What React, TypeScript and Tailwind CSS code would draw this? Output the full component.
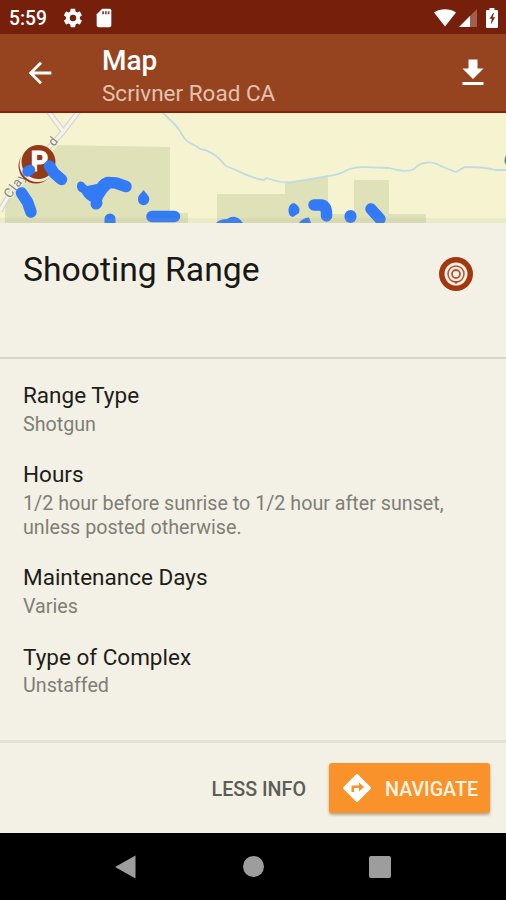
import React from "react";

const details = [
  { label: "Range Type", lines: ["Shotgun"] },
  { label: "Hours", lines: ["1/2 hour before sunrise to 1/2 hour after sunset,", "unless posted otherwise."] },
  { label: "Maintenance Days", lines: ["Varies"] },
  { label: "Type of Complex", lines: ["Unstaffed"] },
];

function StatusBar() {
  return (
    <div className="flex h-[34px] items-center bg-[#761f0b] pt-px pr-[8px] pl-[9px] text-white">
      <span className="w-[53px] pt-[2px] text-[19.300px] leading-none font-medium">5:59</span>
      <svg className="h-[22px] w-[22px]" viewBox="0 0 24 24" fill="currentColor">
        <path d="M19.4 13c0-.3.1-.6.1-1s0-.7-.1-1l2.100-1.700c.2-.1.2-.4.1-.6l-2-3.500c-.1-.2-.4-.3-.6-.2l-2.500 1c-.5-.4-1.100-.7-1.700-1l-.4-2.600c0-.2-.2-.4-.5-.4h-4c-.3 0-.5.2-.5.4l-.4 2.600c-.6.3-1.200.6-1.700 1l-2.500-1c-.2-.1-.5 0-.6.2l-2 3.500c-.1.2-.1.5.1.600l2.100 1.700c0 .3-.1.6-.1 1s0 .7.1 1l-2.100 1.700c-.2.100-.2.400-.1.600l2 3.500c.1.200.4.300.6.200l2.500-1c.5.400 1.100.7 1.700 1l.4 2.600c0 .2.200.4.500.4h4c.300 0 .500-.2.500-.4l.4-2.600c.6-.3 1.200-.6 1.700-1l2.500 1c.2.100.5 0 .6-.2l2-3.500c.1-.2.1-.5-.1-.6zM12 15.500a3.500 3.500 0 1 1 0-7 3.500 3.500 0 0 1 0 7z" />
      </svg>
      <svg className="ml-[9px] h-[22px] w-[22px]" viewBox="0 0 24 24">
        <path d="M18 2h-8L4 8v12c0 1.100.9 2 2 2h12c1.100 0 2-.9 2-2V4c0-1.100-.9-2-2-2z" fill="#fff" />
        <path d="M10 4.500h2V8h-2zM13 4.500h2V8h-2zM16 4.500h2V8h-2z" fill="#8d4a3b" />
      </svg>
      <div className="ml-auto flex items-center">
        <svg className="h-[20px] w-[24px]" viewBox="0 0 24 20" fill="currentColor">
          <path d="M1 4.500C7 .1 17 .1 23 4.500L12 18.500z" />
        </svg>
        <svg className="ml-[2px] h-[18px] w-[18px]" viewBox="0 0 18 18">
          <path d="M18 0V18H0z" fill="#a0604f" />
          <path d="M11 7V18H0z" fill="#fff" />
        </svg>
        <svg className="ml-[9px] h-[20px] w-[12px]" viewBox="0 0 12 20">
          <path d="M3.500 0h5v2H11q1 0 1 1v16q0 1-1 1H1q-1 0-1-1V3q0-1 1-1h2.500z" fill="#fff" />
          <path d="M7.500 5L4 10.500H6.200L5.200 15.500L8.700 9.500H6.500z" fill="#761f0b" stroke="#761f0b" strokeWidth=".5" />
        </svg>
      </div>
    </div>
  );
}

function Header() {
  return (
    <header className="flex h-[79px] items-start border-b-2 border-[#84200b] bg-[#96441f] text-white">
      <svg className="mt-[22px] ml-[23px] h-[34px] w-[34px]" viewBox="0 0 24 24" fill="currentColor">
        <path d="M20 11H7.830l5.590-5.590L12 4l-8 8 8 8 1.410-1.410L7.830 13H20z" />
      </svg>
      <div className="ml-[45px] pt-[10px]">
        <h1 className="text-[28px] leading-[34px] font-medium">Map</h1>
        <p className="text-[22.500px] leading-[31px] text-[#e2c1b2]">Scrivner Road CA</p>
      </div>
      <svg className="mt-[21px] mr-[15px] ml-auto h-[36px] w-[36px]" viewBox="0 0 24 24" fill="currentColor">
        <path d="M19 9h-4V3H9v6H5l7 7 7-7zM5 18v2h14v-2H5z" />
      </svg>
    </header>
  );
}

function RangeMap() {
  return (
    <svg className="block h-[110px] w-[506px] shrink-0" viewBox="0 113 506 110">
      <rect x="0" y="113" width="506" height="110" fill="#f6f4d0" />
      <g fill="#dfe1b9">
        <path d="M58 145L170 147V213H188V223H5V200L35 170z" />
        <path d="M217 194H285V182L328 176V214H354V180H389V214H426V223H217z" />
      </g>
      <path d="M161 111C167 118 177 124 181 133C187 145 194 143 200 149C210 150 218 156 226 166C238 170 251 179 264 180L267 178C277 182 289 184 300 181L323 177C333 175 338 176 347 170C357 166 368 167 389 168C397 170 407 173 414 169C420 162 430 161 437 164C444 168 451 170 456 172L465 167C479 167 489 168 495 170H506" fill="none" stroke="#c2dbe2" strokeWidth="1.800" />
      <g fill="none">
        <path d="M79 111L63 132L43 154L18 184Q8 195 0 211M48 111L63 131" stroke="#d6d2cd" strokeWidth="5.500" />
        <path d="M79 111L63 132L43 154L18 184Q8 195 0 211M48 111L63 131" stroke="#f6f3ea" strokeWidth="3.200" />
      </g>
      <text transform="translate(10 199) rotate(-53)" fontFamily="Roboto, sans-serif" fontSize="13" letterSpacing="1" fill="#85857c" stroke="#f3f0dc" strokeWidth="2" paintOrder="stroke">Clay</text>
      <text transform="translate(54 147) rotate(-51)" fontFamily="Roboto, sans-serif" fontSize="13" fill="#85857c" stroke="#f3f0dc" strokeWidth="2" paintOrder="stroke">d</text>
      <circle cx="36" cy="166" r="17.500" fill="#96351b" />
      <circle cx="37.500" cy="164" r="18" fill="#f6eedd" />
      <circle cx="38.500" cy="162" r="17" fill="#933a16" />
      <text x="39.500" y="171" textAnchor="middle" fontFamily="Roboto, sans-serif" fontSize="27" fontWeight="700" fill="#fff" stroke="#fff" strokeWidth="1">P</text>
      <g fill="none" stroke="#337af7" strokeWidth="11.500" strokeLinecap="round" strokeLinejoin="round">
        <path d="M49.500 166L54 173L61.500 179.500M21.500 193L27.500 202L31 212" />
        <path d="M30 170L27.500 171.500" strokeWidth="10.500" />
        <path d="M108 182.500L116 183L126 186.500" />
        <path d="M152 216.500H174.500" />
        <path d="M96 204L97 203M110 219V223" strokeWidth="11" />
        <path d="M314 205H321Q327 206 326.500 216M371 209L380 219" />
        <path d="M350.500 216V217" strokeWidth="12" />
      </g>
      <g fill="#337af7">
        <path d="M77 185Q78 180 83 182L87 186L97 184Q101 178 107 177L112 187Q107 191 103 198L101 203L91 202Q84 198 82 193Q76 190 77 185z" />
        <path d="M143.500 190Q147 194 149 197C151 207 138 208 138 199C138 195 141 194 143.500 190z" />
        <path d="M288.500 209Q290 202.500 295 203.500Q301 207 299 213L293 217Q288 216 288.500 209z" />
        <path d="M216 223Q220 219 227 219Q236 213 243 223zM299 223Q302 218 309 217.500L311 223z" />
      </g>
      <path d="M506 155Q503 161 506 165z" fill="#528a78" />
      <rect x="0" y="218" width="506" height="5" fill="#9ba283" opacity=".12" />
    </svg>
  );
}

function TargetBadge() {
  return (
    <svg className="h-[36px] w-[36px]" viewBox="0 0 36 36" fill="none">
      <circle cx="18" cy="18" r="17" fill="#a3370f" />
      <circle cx="18" cy="18" r="11.500" fill="#f8efe1" />
      <circle cx="18" cy="18" r="8" stroke="#aa5838" strokeWidth="1.500" />
      <circle cx="18" cy="18" r="4" stroke="#aa5838" strokeWidth="1.800" />
      <path d="M16 25.500L18 28L20 25.500z" fill="#a3370f" />
    </svg>
  );
}

export default function App() {
  return (
    <div className="flex h-[900px] w-[506px] flex-col overflow-hidden bg-[#f3f1e5] font-['Roboto',sans-serif]">
      <StatusBar />
      <Header />
      <RangeMap />
      <section className="flex h-[136px] shrink-0 items-start justify-between border-b-2 border-[#d5d6c8] pr-[32px] pl-[23px]">
        <h2 className="pt-[26px] text-[33.700px] leading-[42px] text-[#181815]">Shooting Range</h2>
        <div className="pt-[32.500px]"><TargetBadge /></div>
      </section>
      <section className="flex h-[384px] shrink-0 flex-col gap-[24.200px] border-b-[3px] border-[#e2e1d5] pt-[22px] pl-[23px]">
        {details.map((item) => (
          <div key={item.label}>
            <h3 className="text-[22.500px] leading-[29px] text-[#1d1d1a]">{item.label}</h3>
            {item.lines.map((line) => (
              <p key={line} className="text-[19.700px] leading-[23.500px] whitespace-nowrap text-[#7f7e77] first-of-type:pt-[2.700px]">{line}</p>
            ))}
          </div>
        ))}
      </section>
      <footer className="flex h-[90px] shrink-0 items-center justify-end pr-[16px]">
        <button className="mr-[23px] pt-[3px] text-[19.700px] font-medium text-[#5d5c56]">LESS INFO</button>
        <button className="flex h-[50px] w-[161px] items-center rounded-[3px] bg-[#f9922b] pl-[13px] text-[19.700px] font-medium text-[#fff4e2] shadow-[0_2px_3px_rgba(80,60,30,0.4)]">
          <svg className="mr-[13px] h-[30px] w-[30px]" viewBox="0 0 30 30">
            <path d="M14 1.500Q15 .5 16 1.500L28.500 14Q29.500 15 28.500 16L16 28.500Q15 29.500 14 28.500L1.500 16Q.5 15 1.500 14z" fill="#fff" />
            <path d="M9.500 19V13.500Q9.500 12.500 10.500 12.500H17V9.500L22 14L17 18.500V15H12V19z" fill="#f9922b" />
          </svg>
          <span className="pt-[3px]">NAVIGATE</span>
        </button>
      </footer>
      <nav className="flex h-[67px] shrink-0 items-center justify-between bg-black pr-[115px] pl-[115px]">
        <svg className="h-[24px] w-[21px]" viewBox="0 0 21 24" fill="#9d9d9d"><path d="M0 12L20.500 .5V23.500z" /></svg>
        <div className="ml-[2px] h-[21px] w-[21px] rounded-full bg-[#9d9d9d]" />
        <div className="h-[22px] w-[22px] rounded-[2px] bg-[#9d9d9d]" />
      </nav>
    </div>
  );
}
